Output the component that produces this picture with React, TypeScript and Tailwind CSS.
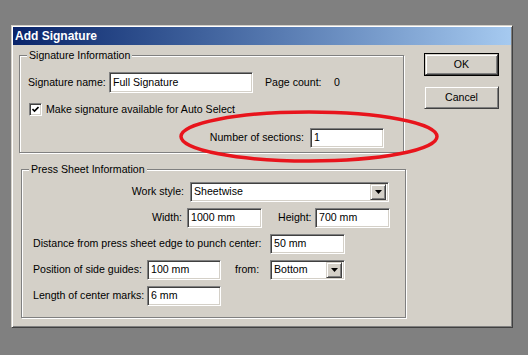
import React from 'react';

const font = { fontFamily: '"Liberation Sans", Arial, sans-serif' };

const sunken =
  'bg-white border border-t-[#808080] border-l-[#808080] border-b-white border-r-white shadow-[inset_1px_1px_0_#404040,inset_-1px_-1px_0_#d4d0c8]';

const raised =
  'bg-[#d4d0c8] border border-t-[#d4d0c8] border-l-[#d4d0c8] border-b-[#404040] border-r-[#404040] shadow-[inset_1px_1px_0_white,inset_-1px_-1px_0_#808080]';

const TextBox: React.FC<{ value: string; className?: string }> = ({ value, className = '' }) => (
  <div className={`${sunken} h-[20px] flex items-center pl-[3px] text-[10.6px] text-black whitespace-nowrap ${className}`}>
    {value}
  </div>
);

const Select: React.FC<{ value: string; className?: string }> = ({ value, className = '' }) => (
  <div className={`${sunken} h-[20px] flex items-center pl-[3px] pr-[2px] text-[10.6px] text-black ${className}`}>
    <span className="flex-1">{value}</span>
    <div className={`${raised} w-[16px] h-[16px] flex items-center justify-center`}>
      <svg width="7" height="4" viewBox="0 0 7 4">
        <polygon points="0,0 7,0 3.5,4" fill="black" />
      </svg>
    </div>
  </div>
);

const GroupBox: React.FC<{ title: string; className?: string; children: React.ReactNode }> = ({
  title,
  className = '',
  children,
}) => (
  <div
    className={`relative border border-[#808080] shadow-[1px_1px_0_white,inset_1px_1px_0_white] ${className}`}
  >
    <span className="absolute -top-[8px] left-[7px] bg-[#d4d0c8] px-[2px] text-[10.6px] leading-[14px] text-black">
      {title}
    </span>
    {children}
  </div>
);

export default function App() {
  return (
    <div className="relative w-[528px] h-[355px] bg-[#808080] pt-[25px] pl-[11px] overflow-hidden" style={font}>
      {/* Dialog window */}
      <div className={`${raised} w-[502px] h-[303px] p-[1px]`}>
        <div className="h-[18px] bg-gradient-to-r from-[#0a246a] to-[#a6caf0] flex items-center pl-[2px]">
          <span className="text-white font-bold text-[12px]">Add Signature</span>
        </div>

        <div className="flex pl-[6px]">
          <div className="flex flex-col w-[388px]">
            {/* Signature Information */}
            <GroupBox title="Signature Information" className="mt-[10px] w-[385px] h-[98px] pt-[16px] pl-[8px]">
              <div className="flex items-center h-[21px]">
                <span className="w-[81px] text-[10.6px] text-black">Signature name:</span>
                <TextBox value="Full Signature" className="w-[144px] h-[21px]" />
                <span className="ml-[12px] w-[69px] text-[10.6px] text-black">Page count:</span>
                <span className="text-[10.6px] text-black">0</span>
              </div>
              <div className="flex items-center mt-[10px] h-[13px]">
                <div className={`${sunken} ml-[1px] w-[13px] h-[13px] flex items-center justify-center`}>
                  <svg width="7" height="7" viewBox="0 0 7 7">
                    <polyline points="0.5,3 2.5,5 6.5,1" fill="none" stroke="black" strokeWidth="1.6" />
                  </svg>
                </div>
                <span className="ml-[4px] text-[10.6px] text-black">Make signature available for Auto Select</span>
              </div>
              <div className="flex items-center justify-end mt-[12px] pr-[19px]">
                <span className="text-[10.6px] text-black">Number of sections:</span>
                <TextBox value="1" className="ml-[6px] w-[74px]" />
              </div>
            </GroupBox>

            {/* Press Sheet Information */}
            <GroupBox title="Press Sheet Information" className="mt-[16px] ml-[2px] w-[385px] h-[149px] pt-[12px] pl-[11px]">
              <div className="flex items-center">
                <span className="w-[151px] text-right text-[10.6px] text-black">Work style:</span>
                <Select value="Sheetwise" className="ml-[6px] w-[199px]" />
              </div>
              <div className="flex items-center mt-[6px]">
                <span className="w-[149px] text-right text-[10.6px] text-black">Width:</span>
                <TextBox value="1000 mm" className="ml-[5px] w-[75px]" />
                <span className="ml-[16px] w-[37px] text-[10.6px] text-black">Height:</span>
                <TextBox value="700 mm" className="w-[75px]" />
              </div>
              <div className="flex items-center mt-[6px]">
                <span className="w-[237px] text-[10.6px] text-black whitespace-nowrap">
                  Distance from press sheet edge to punch center:
                </span>
                <TextBox value="50 mm" className="w-[75px]" />
              </div>
              <div className="flex items-center mt-[6px]">
                <span className="w-[114px] text-[10.6px] text-black whitespace-nowrap">Position of side guides:</span>
                <TextBox value="100 mm" className="w-[74px]" />
                <span className="ml-[14px] w-[35px] text-[10.6px] text-black">from:</span>
                <Select value="Bottom" className="w-[75px]" />
              </div>
              <div className="flex items-center mt-[6px]">
                <span className="w-[114px] text-[10.6px] text-black whitespace-nowrap">Length of center marks:</span>
                <TextBox value="6 mm" className="w-[74px]" />
              </div>
            </GroupBox>
          </div>

          {/* Buttons */}
          <div className="flex flex-col ml-[17px] mt-[8px]">
            <div className="border border-black w-[75px] h-[23px]">
              <div className={`${raised} w-full h-full flex items-center justify-center text-[10.6px] text-black`}>
                OK
              </div>
            </div>
            <div className={`${raised} mt-[10px] w-[75px] h-[23px] flex items-center justify-center text-[10.6px] text-black`}>
              Cancel
            </div>
          </div>
        </div>
      </div>

      {/* Red highlight ellipse drawn over the dialog */}
      <svg className="absolute left-[178px] top-[108px]" width="264" height="58" viewBox="0 0 264 58">
        <ellipse cx="131" cy="28.5" rx="128" ry="24.5" fill="none" stroke="#e8141c" strokeWidth="3.5" />
      </svg>
    </div>
  );
}
